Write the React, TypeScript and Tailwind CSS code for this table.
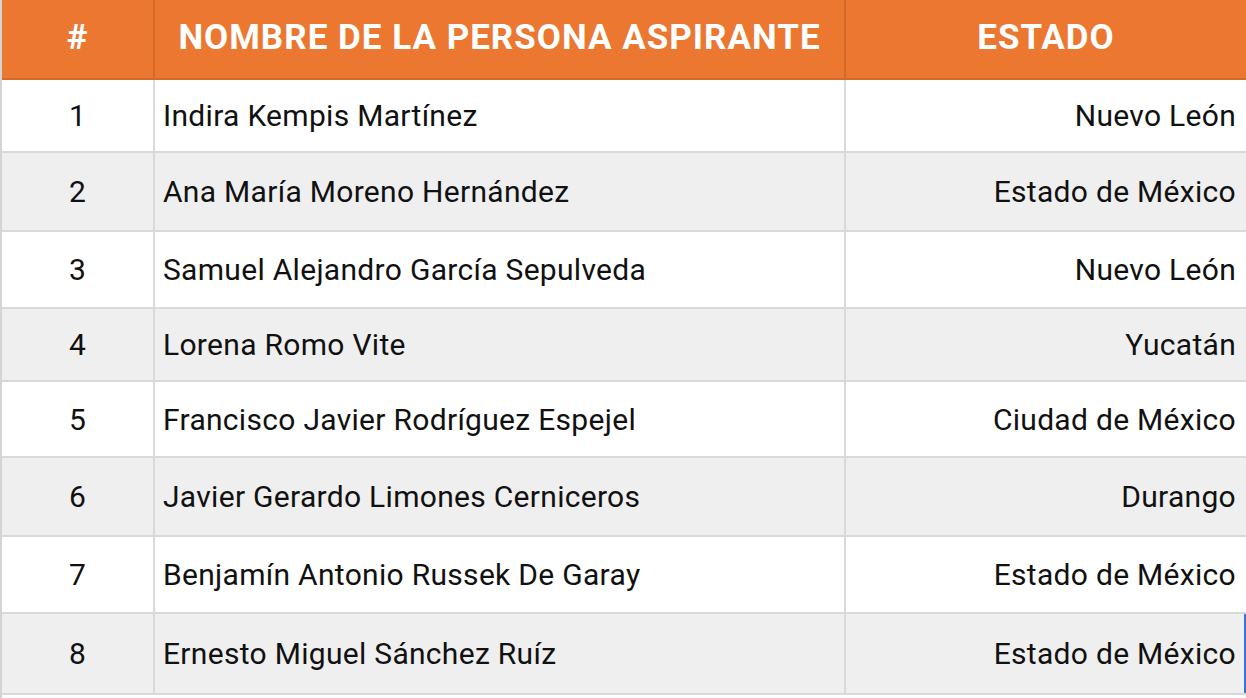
import React from "react";

const rows: [string, string, string, number][] = [
  ["1", "Indira Kempis Martínez", "Nuevo León", 73],
  ["2", "Ana María Moreno Hernández", "Estado de México", 79],
  ["3", "Samuel Alejandro García Sepulveda", "Nuevo León", 77],
  ["4", "Lorena Romo Vite", "Yucatán", 73],
  ["5", "Francisco Javier Rodríguez Espejel", "Ciudad de México", 76],
  ["6", "Javier Gerardo Limones Cerniceros", "Durango", 79],
  ["7", "Benjamín Antonio Russek De Garay", "Estado de México", 77],
  ["8", "Ernesto Miguel Sánchez Ruíz", "Estado de México", 81],
];

export default function App() {
  return (
    <div
      className="w-[1246px] h-[698px] overflow-hidden bg-white border-l-2 border-[#d4d4d4]"
      style={{ fontFamily: "Roboto, 'Liberation Sans', sans-serif" }}
    >
      <div className="flex h-[80px] bg-[#ec7730] border-b-2 border-[#d56a28] text-white font-bold text-[35px] tracking-[1px]">
        <div className="w-[153px] flex items-center justify-center pb-[2px] border-r-2 border-[#d56a28]">#</div>
        <div className="w-[691px] flex items-center justify-center pb-[2px] border-r-2 border-[#d56a28]">
          NOMBRE DE LA PERSONA ASPIRANTE
        </div>
        <div className="flex-1 flex items-center justify-center pb-[2px]">ESTADO</div>
      </div>
      {rows.map(([n, name, estado, h], i) => {
        const last = i === rows.length - 1;
        return (
          <div
            key={n}
            className={`flex border-b-2 border-[#d9d9d9] text-[30px] tracking-[0.3px] text-[#111] ${i % 2 === 1 ? "bg-[#efefef]" : "bg-white"}`}
            style={{ height: h }}
          >
            <div className="w-[153px] flex items-center justify-center border-r-2 border-[#d9d9d9]">{n}</div>
            <div className="w-[691px] flex items-center pl-[8px] border-r-2 border-[#d9d9d9]">{name}</div>
            <div
              className={
                last
                  ? "flex-1 flex items-center justify-end pr-[8px] border-r-2 border-[#3b73d9]"
                  : "flex-1 flex items-center justify-end pr-[10px]"
              }
            >
              {estado}
            </div>
          </div>
        );
      })}
    </div>
  );
}
